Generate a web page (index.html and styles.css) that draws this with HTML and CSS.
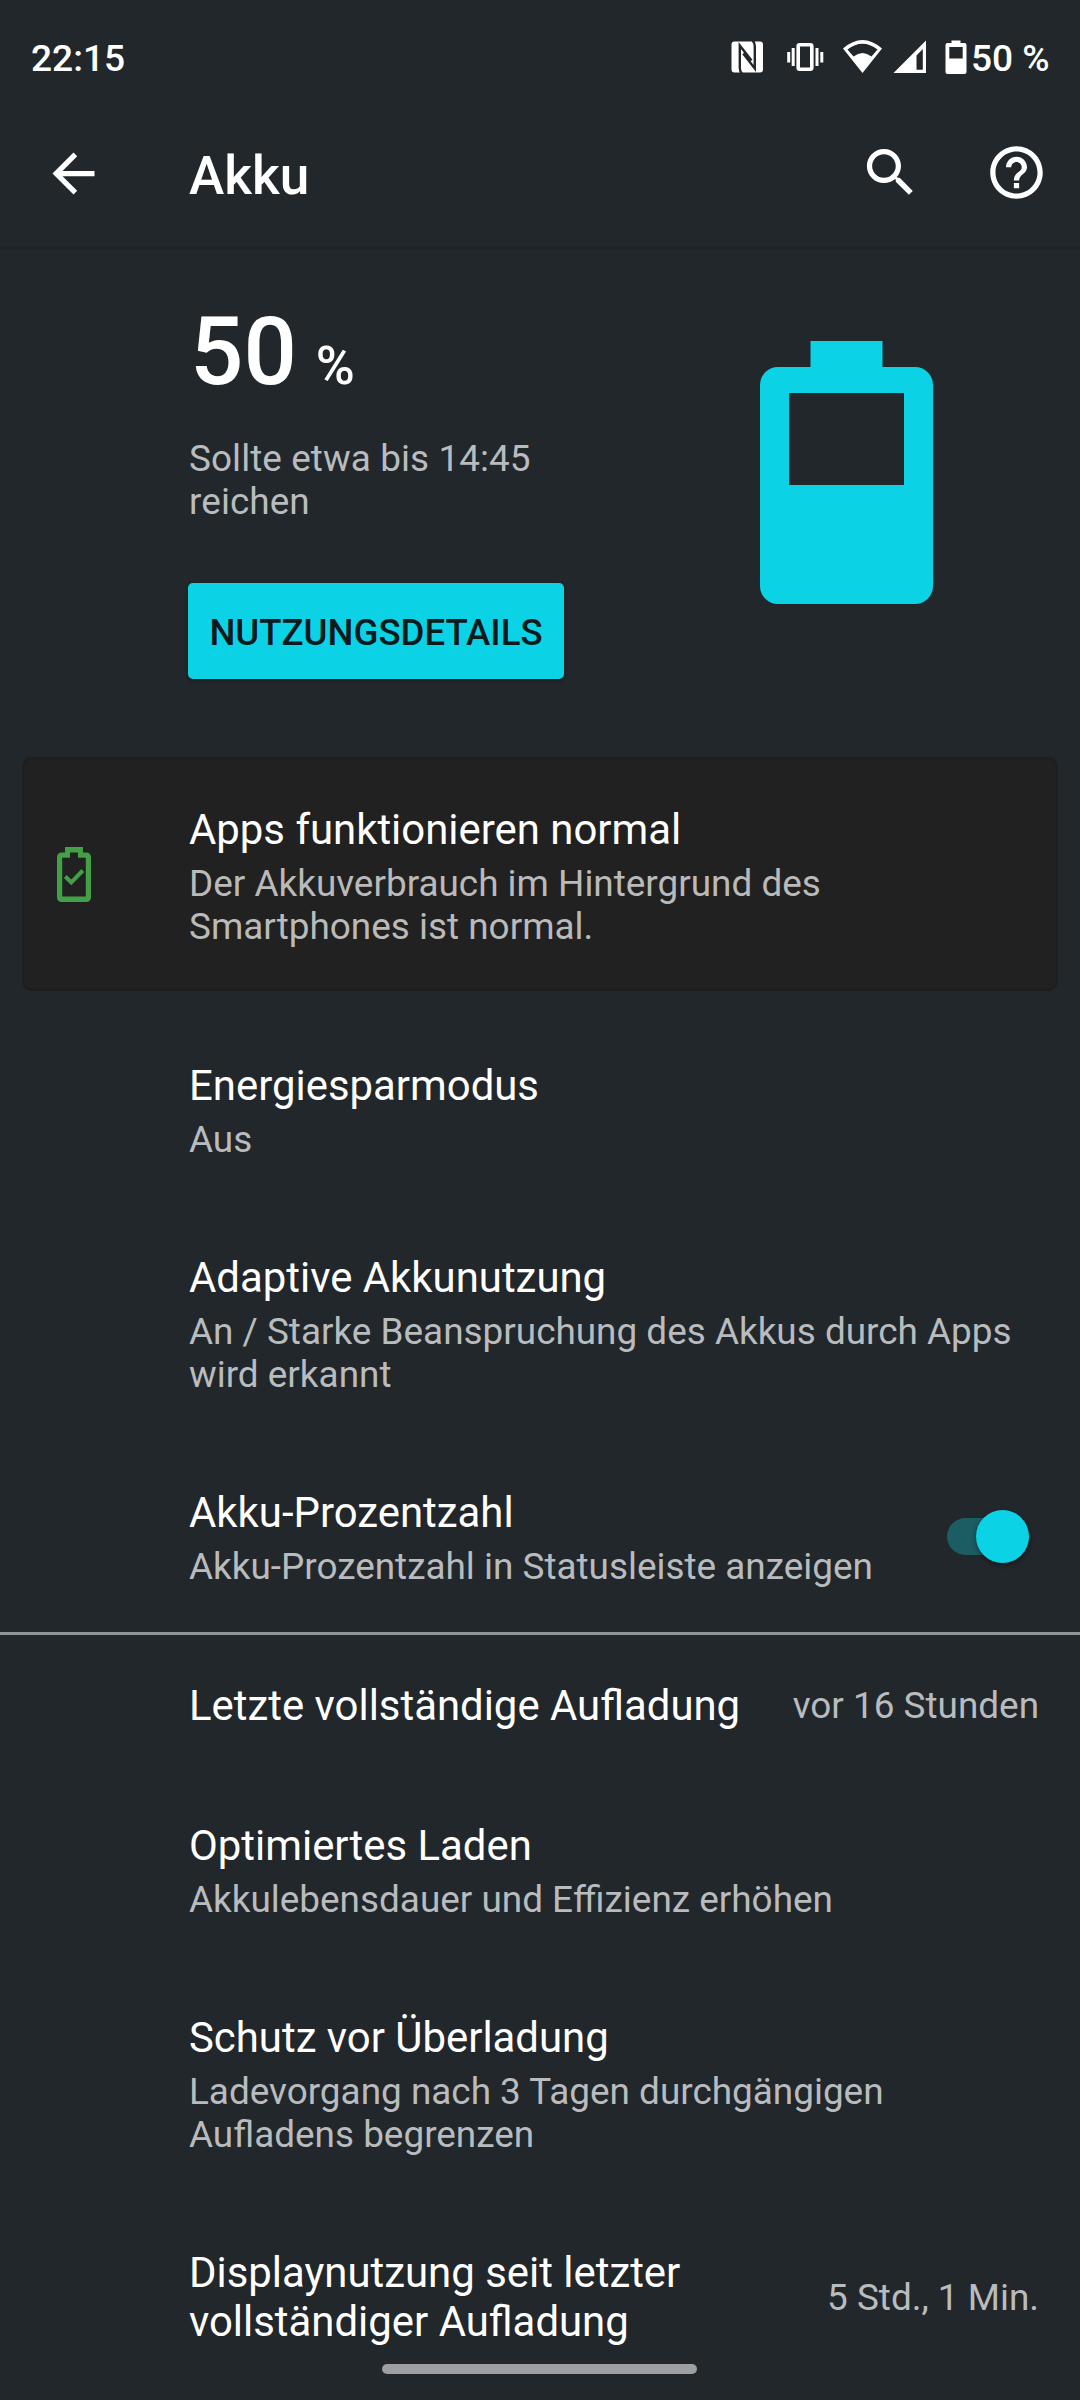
FILE: index.html
```html
<!DOCTYPE html>
<html lang="de">
<head>
<meta charset="utf-8">
<title>Akku</title>
<link rel="stylesheet" href="styles.css">
</head>
<body>
<header class="status">
  <span class="clock">22:15</span>
  <svg class="status-icons" width="246" height="50" viewBox="725 33 246 50" fill="#fff">
    <rect x="731.5" y="41.5" width="31.5" height="31" rx="3"/>
    <path d="M742 73.500Q739.800 71.500 739.800 68V45.500L751.500 60.500M752.500 40.500Q754.800 42.500 754.800 46V68.500L743.200 53.500" fill="none" stroke="#22272b" stroke-width="2.400"/>
    <rect x="798.200" y="44.800" width="13.600" height="24.500" rx="1.500" fill="none" stroke="#fff" stroke-width="3.600"/>
    <path d="M793.200 48v18M788.700 52v10.500M817 48v18M821.800 52v10.500" fill="none" stroke="#fff" stroke-width="3"/>
    <path fill-rule="evenodd" d="M843 48.500Q862.500 31.500 882 48.500L862.500 73zM847.500 49.500L853.500 56.500Q862.500 49.500 871.500 56.500L877.500 49.500Q862.500 38 847.500 49.500z"/>
    <path fill-rule="evenodd" d="M926 40.500V73H893.500zM922.800 49L916.500 55.500V69.800H922.800z"/>
    <path fill-rule="evenodd" d="M951.500 40.500h9V43h4a2 2 0 0 1 2 2v27a2 2 0 0 1-2 2h-17a2 2 0 0 1-2-2V45a2 2 0 0 1 2-2h4zM949.300 47v11.500h13.400V47z"/>
  </svg>
  <span class="level">50 %</span>
</header>
<nav class="toolbar">
  <svg class="back" width="63" height="63" viewBox="0 0 24 24"><path fill="#fff" d="M20 11H7.830l5.590-5.590L12 4l-8 8 8 8 1.410-1.410L7.830 13H20v-2z"/></svg>
  <h1>Akku</h1>
  <svg class="search" width="63" height="63" viewBox="0 0 24 24"><path fill="#fff" d="M15.500 14h-.79l-.28-.27C15.410 12.590 16 11.110 16 9.500 16 5.910 13.090 3 9.500 3S3 5.910 3 9.500 5.910 16 9.500 16c1.610 0 3.090-.59 4.230-1.570l.27.28v.79l5 4.990L20.490 19l-4.990-5zm-6 0C7.010 14 5 11.990 5 9.500S7.010 5 9.500 5 14 7.010 14 9.500 11.990 14 9.500 14z"/></svg>
  <svg class="help" width="63" height="63" viewBox="0 0 24 24"><path fill="#fff" d="M11 18h2v-2h-2v2zm1-16C6.480 2 2 6.480 2 12s4.480 10 10 10 10-4.480 10-10S17.520 2 12 2zm0 18c-4.410 0-8-3.590-8-8s3.590-8 8-8 8 3.590 8 8-3.590 8-8 8zm0-14c-2.210 0-4 1.790-4 4h2c0-1.100.9-2 2-2s2 .9 2 2c0 2-3 1.750-3 5h2c0-2.250 3-2.500 3-5 0-2.210-1.790-4-4-4z"/></svg>
</nav>
<section class="summary">
  <div class="summary-text">
    <p class="percent"><span>50</span><small>%</small></p>
    <p class="sub">Sollte etwa bis 14:45<br>reichen</p>
    <button class="details">NUTZUNGSDETAILS</button>
  </div>
  <svg class="battery" width="173" height="263" viewBox="0 0 173 263"><path fill="#0bd3e5" fill-rule="evenodd" d="M50.500 0h72v26h32.500a18 18 0 0 1 18 18v201a18 18 0 0 1-18 18H18a18 18 0 0 1-18-18V44a18 18 0 0 1 18-18h32.500zM29 52v92h115V52z"/></svg>
</section>
<section class="card">
  <svg class="card-icon" width="34" height="55" viewBox="0 0 34 55"><path fill="#43a047" fill-rule="evenodd" d="M8 0H26V5.500H29.500a4.500 4.500 0 0 1 4.500 4.500V50.500a4.500 4.500 0 0 1-4.500 4.500H4.500a4.500 4.500 0 0 1-4.500-4.500V10a4.500 4.500 0 0 1 4.500-4.500H8zM13 5.500V10.800H5.200V49.500H28.800V10.800H21V5.500z"/><path d="M8.300 29.500l6 6 11.500-12" fill="none" stroke="#43a047" stroke-width="4"/></svg>
  <div class="card-text"><p class="title">Apps funktionieren normal</p><p class="sub">Der Akkuverbrauch im Hintergrund des<br>Smartphones ist normal.</p></div>
</section>
<main>
  <div class="row"><div><p class="title">Energiesparmodus</p><p class="sub">Aus</p></div></div>
  <div class="row"><div><p class="title">Adaptive Akkunutzung</p><p class="sub">An / Starke Beanspruchung des Akkus durch Apps<br>wird erkannt</p></div></div>
  <div class="row before-rule"><div><p class="title">Akku-Prozentzahl</p><p class="sub">Akku-Prozentzahl in Statusleiste anzeigen</p></div><span class="switch"><i class="knob"></i></span></div>
  <hr>
  <div class="row single"><p class="title">Letzte vollständige Aufladung</p><p class="sub">vor 16 Stunden</p></div>
  <div class="row"><div><p class="title">Optimiertes Laden</p><p class="sub">Akkulebensdauer und Effizienz erhöhen</p></div></div>
  <div class="row"><div><p class="title">Schutz vor Überladung</p><p class="sub">Ladevorgang nach 3 Tagen durchgängigen<br>Aufladens begrenzen</p></div></div>
  <div class="row"><p class="title">Displaynutzung seit letzter<br>vollständiger Aufladung</p><p class="sub">5 Std., 1 Min.</p></div>
</main>
<div class="home"></div>
</body>
</html>
```
FILE: styles.css
```css
* { box-sizing: border-box; margin: 0; }
body { position: relative; height: 2400px; overflow: hidden; background: #22272b; color: #fff; font-family: Roboto, sans-serif; }
svg { display: block; flex: none; }
.status { display: flex; align-items: center; height: 116px; padding: 0 31px; font-size: 37.1px; font-weight: 500; }
.clock, .level { padding-top: 1px; white-space: nowrap; }
.level { width: 78px; }
.status-icons { margin-left: auto; }
.toolbar { display: flex; align-items: center; height: 133px; padding: 0 32px 18px 42px; border-bottom: 2px solid #1f2327; }
h1 { margin-left: 84px; padding-top: 6px; font-size: 53.2px; font-weight: 500; }
.back { margin-top: 1px; }
.search { margin-left: auto; }
.help { margin-left: 63px; }
.summary { display: flex; justify-content: space-between; height: 508px; padding: 57px 147px 0 189px; }
.battery { margin-top: 35px; }
.percent { display: flex; align-items: baseline; gap: 19px; height: 92px; padding-left: 1px; font-size: 94px; font-weight: 500; line-height: 92px; }
.percent small { font-size: 53px; line-height: 60px; }
.sub { color: #b9bcbe; font-size: 36.9px; line-height: 43px; white-space: nowrap; }
.summary .sub { margin-top: 39px; letter-spacing: .08px; }
.details { width: 376px; height: 96px; margin: 60px 0 0 -1px; padding: 2px 0 0; border: 0; border-radius: 5px; background: #0bd3e5; color: #0b1a1d; font: 500 36.6px Roboto, sans-serif; box-shadow: 0 2px 4px rgba(0, 0, 0, .3); }
.card { display: flex; align-items: center; height: 234px; margin: 0 22px; padding-left: 33px; background: #212121; border: 2px solid #1c1e1f; border-radius: 10px; }
.card .sub { color: #bababa; }
.card-icon { margin-right: 98px; }
.card-text { padding-top: 5px; }
.title { font-size: 41.9px; line-height: 49px; white-space: nowrap; }
div > .title + .sub { margin-top: 8px; }
main { padding-top: 24px; }
.row { display: flex; align-items: center; justify-content: space-between; padding: 46px 41px 46px 189px; }
.row > .title + .sub { flex: none; margin-top: 0; }
.before-rule { padding-bottom: 44px; }
.single { height: 140px; }
hr { height: 3px; border: 0; background: #8f9699; }
.switch { position: relative; top: -2px; width: 82px; height: 37px; margin-right: 10px; border-radius: 19px; background: #1c5c63; }
.knob { position: absolute; right: 0; top: -8px; width: 53px; height: 53px; border-radius: 50%; background: #0bd3e5; box-shadow: 0 2px 5px rgba(0, 0, 0, .4); }
.home { position: absolute; left: 382px; top: 2364px; width: 315px; height: 10px; border-radius: 5px; background: #9d9fa1; }
```
